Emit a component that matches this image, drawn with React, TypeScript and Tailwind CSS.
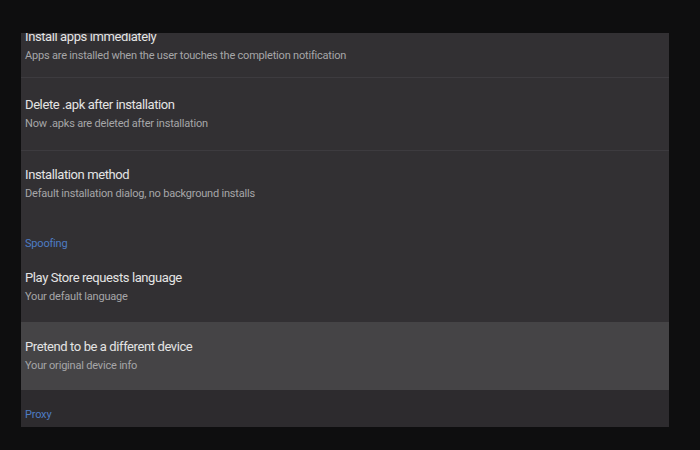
import type { ReactNode } from "react";

type Item = { title: string; summary: string; h: string; pt: string; active?: boolean };

const titleCls = "text-[13px] leading-[20px] tracking-[-0.4px] text-[#e4e4e4]";
const summaryCls = "mt-[1px] text-[11px] leading-[16px] tracking-[-0.2px] text-[#a6a6a8]";

function Row({ item }: { item: Item }) {
  return (
    <div className={`${item.h} ${item.pt} px-[4px] ${item.active ? "bg-[#454446]" : ""}`}>
      <div className={titleCls}>{item.title}</div>
      <div className={summaryCls}>{item.summary}</div>
    </div>
  );
}

function Header({ children, cls }: { children: ReactNode; cls: string }) {
  return <div className={`${cls} px-[4px] text-[11px] leading-[16px] tracking-[-0.2px] text-[#4d7cc4]`}>{children}</div>;
}

const Divider = () => <div className="h-px bg-[#3d3b3f]" />;

export default function App() {
  return (
    <div className="w-[700px] h-[450px] bg-[#0e0e0f] pt-[33px] pl-[21px] font-[Roboto,sans-serif]">
      <div className="w-[648px] h-[394px] overflow-hidden bg-[#323033] flex flex-col">
        {/* first row is scrolled partly out of view */}
        <div className="h-[44px] px-[4px] shrink-0">
          <div className={`-mt-[6px] ${titleCls}`}>Install apps immediately</div>
          <div className={summaryCls}>Apps are installed when the user touches the completion notification</div>
        </div>
        <Divider />
        <Row item={{ title: "Delete .apk after installation", summary: "Now .apks are deleted after installation", h: "h-[72px]", pt: "pt-[17px]" }} />
        <Divider />
        <Row item={{ title: "Installation method", summary: "Default installation dialog, no background installs", h: "h-[72px]", pt: "pt-[14px]" }} />
        <Header cls="h-[30px] pt-[13px]">Spoofing</Header>
        <Row item={{ title: "Play Store requests language", summary: "Your default language", h: "h-[69px]", pt: "pt-[15px]" }} />
        <Row item={{ title: "Pretend to be a different device", summary: "Your original device info", h: "h-[68px]", pt: "pt-[15px]", active: true }} />
        <div className="flex-1 bg-[#2d2b2e]">
          <Header cls="pt-[17px]">Proxy</Header>
        </div>
      </div>
    </div>
  );
}
